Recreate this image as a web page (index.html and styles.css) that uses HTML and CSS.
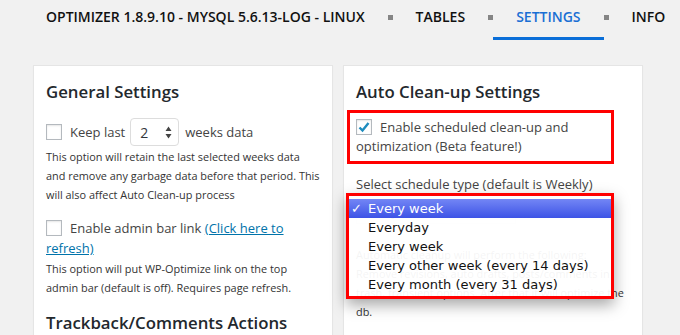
FILE: index.html
```html
<!DOCTYPE html>
<html lang="en">

<head>
    <meta charset="UTF-8">
    <meta name="viewport" content="width=device-width, initial-scale=1.0">
    <title>WP-Optimize Settings</title>
    <link rel="stylesheet" href="styles.css">
</head>

<body>

    <nav class="tabs">
        <span class="tab">Optimizer 1.8.9.10 - MySQL 5.6.13-log - Linux</span>
        <span class="sep"></span>
        <span class="tab">Tables</span>
        <span class="sep"></span>
        <span class="tab active">Settings</span>
        <span class="sep"></span>
        <span class="tab">Info</span>
    </nav>

    <div class="columns">
        <div class="card">
            <h2>General Settings</h2>
            <div class="row">
                <span class="checkbox"></span>
                Keep last
                <span class="number">2
                    <svg class="spin" width="7" height="13" viewBox="0 0 7 13">
                        <path d="M3.5 0.5 L6.5 5 L0.5 5 Z M0.5 8 L6.5 8 L3.5 12.5 Z" fill="#444"/>
                    </svg>
                </span>
                weeks data
            </div>
            <p class="desc">This option will retain the last selected weeks data and remove any garbage data before that period. This will also affect Auto Clean-up process</p>

            <div class="label">
                <span class="checkbox"></span>Enable admin bar link <a href="#">(Click here to refresh)</a>
            </div>
            <p class="desc">This option will put WP-Optimize link on the top admin bar (default is off). Requires page refresh.</p>

            <h2 class="next">Trackback/Comments Actions</h2>
        </div>

        <div class="card">
            <h2>Auto Clean-up Settings</h2>
            <div class="label marked">
                <span class="checkbox checked">
                    <svg width="14" height="14" viewBox="0 0 14 14">
                        <path d="M2.5 7.5 L5.5 10.5 L11.5 3" fill="none" stroke="#1e8cbe" stroke-width="2.4"/>
                    </svg>
                </span>Enable scheduled clean-up and optimization (Beta feature!)
            </div>

            <div class="label select-label">Select schedule type (default is Weekly)</div>
            <div class="schedule">
                <div class="select">Every week</div>
                <ul class="popup">
                    <li class="current"><span class="tick">✓</span>Every week</li>
                    <li>Everyday</li>
                    <li>Every week</li>
                    <li>Every other week (every 14 days)</li>
                    <li>Every month (every 31 days)</li>
                </ul>
            </div>
            <p class="desc">Automatic cleanup will perform the following: Remove revisions, auto drafts, posts/comments in trash, transient options. After that it will optimize the db.</p>
        </div>
    </div>

</body>

</html>
```

FILE: styles.css
```css
body {
    margin: 0;
    background-color: #f1f1f1;
    font-family: 'Open Sans', 'Noto Sans', sans-serif;
    color: #444;
}

.tabs {
    display: flex;
    align-items: flex-start;
    padding-left: 23px;
    height: 40px;
}

.tab {
    flex-shrink: 0;
    white-space: nowrap;
    font-size: 14px;
    line-height: 20px;
    font-weight: 600;
    text-transform: uppercase;
    color: #111;
    padding: 7px 23px 10px;
    border-bottom: 3px solid transparent;
}

.tab.active {
    color: #1a6fd4;
    border-bottom-color: #0a6ed8;
}

.sep {
    flex-shrink: 0;
    width: 5px;
    height: 5px;
    margin-top: 15px;
    background-color: #858585;
}

.columns {
    display: flex;
    gap: 10px;
    padding: 25px 0 0 33px;
}

.card {
    width: 300px;
    box-sizing: border-box;
    height: 320px;
    background-color: #fff;
    border: 1px solid #e5e5e5;
    box-shadow: 0 1px 1px rgba(0, 0, 0, 0.04);
    padding: 0 12px;
}

h2 {
    font-size: 16.8px;
    line-height: 23px;
    font-weight: 600;
    color: #23282d;
    margin: 14px 0 15px;
}

h2.next {
    margin-top: 14px;
}

.checkbox {
    display: inline-block;
    width: 16px;
    height: 16px;
    box-sizing: border-box;
    border: 1px solid #b4b9be;
    background-color: #fff;
    box-shadow: inset 0 1px 2px rgba(0, 0, 0, 0.1);
    vertical-align: -3px;
    margin-right: 8px;
    position: relative;
}

.checkbox svg {
    position: absolute;
    left: 0;
    top: 0;
}

.row {
    display: flex;
    align-items: center;
    height: 28px;
    margin-top: 1px;
    font-size: 13px;
}

.number {
    display: inline-flex;
    align-items: center;
    justify-content: space-between;
    box-sizing: border-box;
    width: 49px;
    height: 28px;
    margin: 0 6px 0 5px;
    padding: 0 6px 0 9px;
    border: 1px solid #ddd;
    border-radius: 4px;
    color: #32373c;
    font-size: 14px;
}

.desc {
    font-size: 10.9px;
    line-height: 19px;
    color: #333;
    margin: 1px 0 0;
}

.label {
    font-size: 13px;
    line-height: 20px;
    margin-top: 14px;
}

a {
    color: #0073aa;
}

.marked {
    width: 267px;
    box-sizing: border-box;
    margin: -8px 0 0 -9px;
    padding: 5px 6px 5px;
    border: 3px solid #ff0000;
    line-height: 19px;
}

.select-label {
    margin-top: 10px;
}

.schedule {
    position: relative;
    margin-top: 4px;
    height: 24px;
}

.select {
    font-size: 13px;
    line-height: 24px;
    padding-left: 8px;
    width: 150px;
    border: 1px solid #ddd;
}

.popup {
    position: absolute;
    left: -10px;
    top: -5px;
    width: 268px;
    box-sizing: border-box;
    margin: 0;
    padding: 3px 0 2px;
    list-style: none;
    border: 3px solid #ff0000;
    background-color: rgba(255, 255, 255, 0.95);
    box-shadow: 0 6px 14px rgba(0, 0, 0, 0.35);
    font-family: 'DejaVu Sans', sans-serif;
    font-size: 13px;
    line-height: 19px;
    color: #111;
}

.popup li {
    padding-left: 19px;
}

.popup li.current {
    position: relative;
    color: #fff;
    background: linear-gradient(#7386f5, #3d53e6);
}

.tick {
    position: absolute;
    left: 2px;
}

.schedule + .desc {
    margin-top: 23px;
}
```
